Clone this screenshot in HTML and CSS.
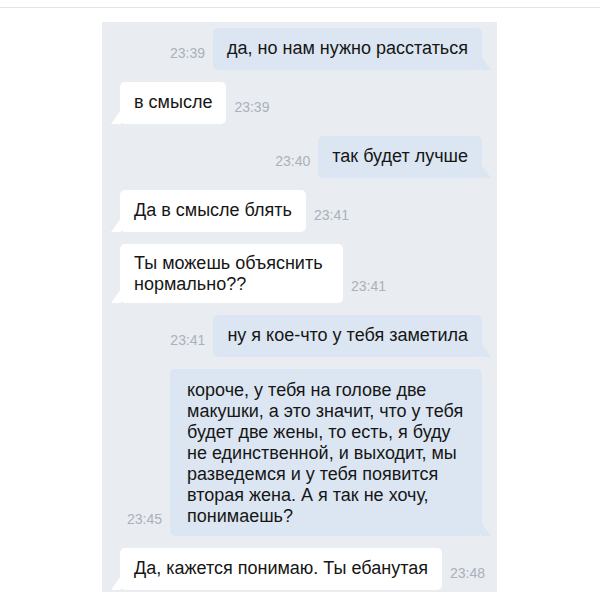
FILE: index.html
```html
<!DOCTYPE html>
<html lang="ru">
<head>
    <meta charset="UTF-8">
    <title>Диалог</title>
    <link rel="stylesheet" href="styles.css">
</head>
<body>

<div class="topline"></div>

<div class="chat">
    <div class="row out">
        <span class="time">23:39</span>
        <div class="msg">да, но нам нужно расстаться</div>
    </div>
    <div class="row in">
        <div class="msg">в смысле</div>
        <span class="time">23:39</span>
    </div>
    <div class="row out">
        <span class="time">23:40</span>
        <div class="msg">так будет лучше</div>
    </div>
    <div class="row in">
        <div class="msg">Да в смысле блять</div>
        <span class="time">23:41</span>
    </div>
    <div class="row in">
        <div class="msg narrow">Ты можешь объяснить нормально??</div>
        <span class="time">23:41</span>
    </div>
    <div class="row out">
        <span class="time">23:41</span>
        <div class="msg">ну я кое-что у тебя заметила</div>
    </div>
    <div class="row out">
        <span class="time">23:45</span>
        <div class="msg wide">короче, у тебя на голове две макушки, а это значит, что у тебя будет две жены, то есть, я буду не единственной, и выходит, мы разведемся и у тебя появится вторая жена. А я так не хочу, понимаешь?</div>
    </div>
    <div class="row in">
        <div class="msg">Да, кажется понимаю. Ты ебанутая</div>
        <span class="time">23:48</span>
    </div>
</div>

</body>
</html>
```

FILE: styles.css
```css
/* переписка */
body { margin: 0; background: #fff; font-family: "Liberation Sans", Arial, sans-serif; }
.topline { height: 1px; margin-top: 7px; background: #e4e4e4; }
.chat { width: 395px; height: 570px; margin: 14px 0 0 102px; padding-top: 6px; box-sizing: border-box; background: #e9ecf0; display: flex; flex-direction: column; gap: 12px; overflow: hidden; }
.row { display: flex; align-items: flex-end; gap: 8px; }
.row.out { justify-content: flex-end; padding-right: 15px; }
.row.in { padding-left: 18px; }
.msg { position: relative; padding: 10px 14px 11px; font-size: 18px; line-height: 21px; color: #161616; border-radius: 5px; white-space: nowrap; }
.row.out .msg { background: #dce6f2; }
.row.in .msg { background: #fff; }
.row.out .msg::after { content: ""; position: absolute; right: -9px; bottom: 0; width: 10px; height: 14px; background: #dce6f2; clip-path: polygon(0 0, 100% 100%, 0 100%); }
.row.in .msg::after { content: ""; position: absolute; left: -9px; bottom: 0; width: 10px; height: 14px; background: #fff; clip-path: polygon(100% 0, 100% 100%, 0 100%); }
.msg.narrow { white-space: normal; max-width: 192px; padding: 9px 17px 8px 14px; }
.msg.wide { white-space: normal; max-width: 278px; padding: 11px 17px 9px; }
.time { font-size: 14px; line-height: 16px; color: #a9b1bb; margin-bottom: 9px; }
```
